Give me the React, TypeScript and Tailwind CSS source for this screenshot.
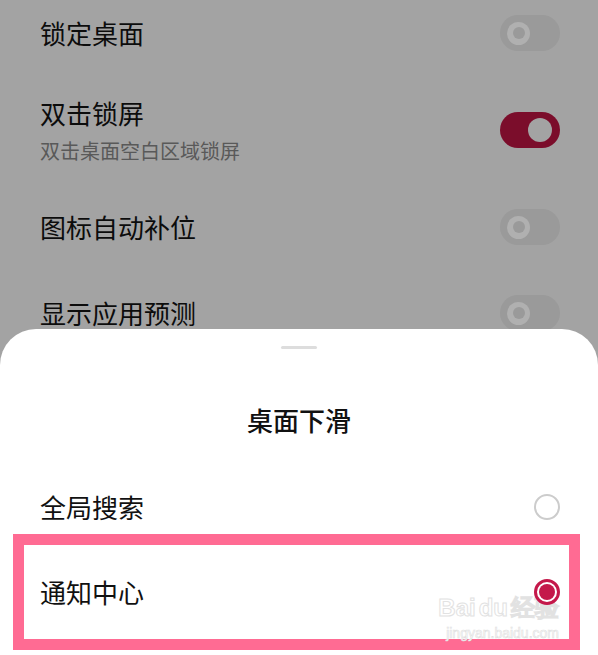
import React from 'react';

const FONT = "font-['Noto_Sans_CJK_SC','Noto_Sans',sans-serif]";

/** 设置页里的开关（被遮罩压暗） */
function Toggle({ on = false }: { on?: boolean }) {
  if (on) {
    return (
      <div className="flex h-[36px] w-[60px] items-center justify-end rounded-full bg-[#7b0d2b] pr-[8px]">
        <div className="h-[24px] w-[24px] rounded-full bg-[#a3a3a3]" />
      </div>
    );
  }
  return (
    <div className="flex h-[36px] w-[60px] items-center rounded-full bg-[#9a9a9a] pl-[7px]">
      <div className="flex h-[23px] w-[23px] items-center justify-center rounded-full bg-[#b0b0b0]">
        <div className="h-[12px] w-[12px] rounded-full bg-[#9a9a9a]" />
      </div>
    </div>
  );
}

function Radio({ checked = false }: { checked?: boolean }) {
  if (checked) {
    return (
      <div className="relative z-10 flex h-[26px] w-[26px] items-center justify-center rounded-full border-[3px] border-[#c4184a] bg-white">
        <div className="h-[16px] w-[16px] rounded-full bg-[#c4184a]" />
      </div>
    );
  }
  return <div className="h-[26px] w-[26px] rounded-full border-2 border-[#cccccc]" />;
}

export default function App() {
  return (
    <div className={`relative h-[655px] w-[598px] overflow-hidden bg-[#a3a3a3] ${FONT}`}>
      {/* 背景设置列表 */}
      <div className="flex flex-col">
        <div className="flex h-[66px] items-center justify-between pl-[40px] pr-[38px]">
          <span className="text-[26px] leading-none text-[#0c0c0c]">锁定桌面</span>
          <Toggle />
        </div>
        <div className="flex h-[128px] items-center justify-between pl-[40px] pr-[38px]">
          <div className="flex flex-col">
            <span className="text-[26px] leading-none text-[#0c0c0c]">双击锁屏</span>
            <span className="mt-[15px] text-[20px] leading-none text-[#595959]">双击桌面空白区域锁屏</span>
          </div>
          <Toggle on />
        </div>
        <div className="flex h-[66px] items-center justify-between pl-[40px] pr-[38px]">
          <span className="text-[26px] leading-none text-[#0c0c0c]">图标自动补位</span>
          <Toggle />
        </div>
        <div className="flex h-[106px] items-center justify-between pl-[40px] pr-[38px]">
          <span className="text-[26px] leading-none text-[#0c0c0c]">显示应用预测</span>
          <Toggle />
        </div>
      </div>

      {/* 底部弹窗 */}
      <div className="absolute inset-x-0 top-[329px] bottom-0 flex flex-col rounded-t-[36px] bg-white">
        <div className="flex justify-center pt-[17px]">
          <div className="h-[3px] w-[36px] rounded-full bg-[#dddddd]" />
        </div>
        <div className="mt-[31px] flex h-[80px] items-center justify-center">
          <span className="text-[26px] font-medium leading-none text-[#111111]">桌面下滑</span>
        </div>
        <div className="mt-[20px] flex h-[54px] items-center justify-between pl-[40px] pr-[38px]">
          <span className="text-[26px] leading-none text-[#111111]">全局搜索</span>
          <Radio />
        </div>
        <div className="relative ml-[13px] mr-[18px] flex h-[116px] items-center justify-between border-[11px] border-[#ff6b93] pl-[16px] pr-[9px]">
          {/* 水印 */}
          <div className="pointer-events-none absolute right-[10px] bottom-[-1px] flex flex-col items-end font-['Liberation_Sans',sans-serif] leading-none">
            <span className="text-[24px] font-bold text-white [-webkit-text-stroke:1px_#e2e2e2]">Bai<span className="ml-[3px]">du</span><span className="ml-[3px]">经验</span></span>
            <span className="mt-[6px] text-[14px] text-white [-webkit-text-stroke:0.6px_#dedede]">jingyan.baidu.com</span>
          </div>
          <span className="text-[26px] leading-none text-[#111111]">通知中心</span>
          <Radio checked />
        </div>
      </div>
    </div>
  );
}
